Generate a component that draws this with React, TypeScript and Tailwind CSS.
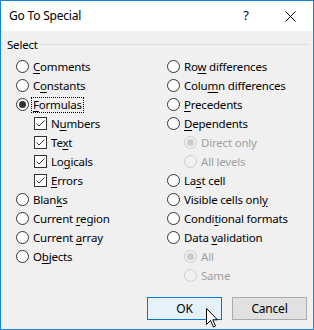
import React from 'react';
import clsx from 'clsx';

type Item = {
  label: React.ReactNode;
  kind: 'radio' | 'check';
  checked?: boolean;
  disabled?: boolean;
  sub?: boolean;
  focus?: boolean;
};

const u = (before: string, key: string, after: string) => (
  <>
    {before}
    <span className="underline underline-offset-[2px]">{key}</span>
    {after}
  </>
);

const leftItems: Item[] = [
  { label: u('', 'C', 'omments'), kind: 'radio' },
  { label: u('C', 'o', 'nstants'), kind: 'radio' },
  { label: u('', 'F', 'ormulas'), kind: 'radio', checked: true, focus: true },
  { label: u('N', 'u', 'mbers'), kind: 'check', checked: true, sub: true },
  { label: u('Te', 'x', 't'), kind: 'check', checked: true, sub: true },
  { label: u('Lo', 'g', 'icals'), kind: 'check', checked: true, sub: true },
  { label: u('', 'E', 'rrors'), kind: 'check', checked: true, sub: true },
  { label: u('Blan', 'k', 's'), kind: 'radio' },
  { label: u('Current ', 'r', 'egion'), kind: 'radio' },
  { label: u('Current ', 'a', 'rray'), kind: 'radio' },
  { label: u('O', 'b', 'jects'), kind: 'radio' },
];

const rightItems: Item[] = [
  { label: u('Ro', 'w', ' differences'), kind: 'radio' },
  { label: u('Colu', 'm', 'n differences'), kind: 'radio' },
  { label: u('', 'P', 'recedents'), kind: 'radio' },
  { label: u('', 'D', 'ependents'), kind: 'radio' },
  { label: 'Direct only', kind: 'radio', checked: true, disabled: true, sub: true },
  { label: 'All levels', kind: 'radio', disabled: true, sub: true },
  { label: u('La', 's', 't cell'), kind: 'radio' },
  { label: u('Visible cells onl', 'y', ''), kind: 'radio' },
  { label: u('Condi', 't', 'ional formats'), kind: 'radio' },
  { label: u('Data ', 'v', 'alidation'), kind: 'radio' },
  { label: 'All', kind: 'radio', checked: true, disabled: true, sub: true },
  { label: 'Same', kind: 'radio', disabled: true, sub: true },
];

const Radio = ({ checked, disabled }: { checked?: boolean; disabled?: boolean }) => (
  <span
    className={clsx(
      'w-[13px] h-[13px] rounded-full border flex items-center justify-center shrink-0',
      disabled ? 'border-[#cccccc] bg-[#f0f0f0]' : 'border-[#333333] bg-white'
    )}
  >
    {checked && (
      <span className={clsx('w-[7px] h-[7px] rounded-full', disabled ? 'bg-[#cccccc]' : 'bg-[#333333]')} />
    )}
  </span>
);

const Check = ({ checked }: { checked?: boolean }) => (
  <span className="w-[13px] h-[13px] border border-[#333333] bg-white flex items-center justify-center shrink-0">
    {checked && (
      <svg width="11" height="11" viewBox="0 0 11 11">
        <polyline points="1.5,5.5 4,8 9.5,2.5" fill="none" stroke="#333333" strokeWidth="1" />
      </svg>
    )}
  </span>
);

const Row = ({ item, subIndent }: { item: Item; subIndent: string }) => (
  <div className={clsx('h-[19px] flex items-center gap-[4px]', item.sub && subIndent)}>
    {item.kind === 'radio' ? <Radio checked={item.checked} disabled={item.disabled} /> : <Check checked={item.checked} />}
    <span
      className={clsx(
        'leading-[14px] whitespace-nowrap',
        item.disabled ? 'text-[#a0a0a0]' : 'text-black',
        item.focus && 'outline outline-1 outline-dotted outline-black -ml-[1px] px-[1px]'
      )}
    >
      {item.label}
    </span>
  </div>
);

const Cursor = () => (
  <svg className="absolute left-[205px] top-[307px]" width="13" height="20" viewBox="0 0 13 20">
    <path
      d="M0.5 0.5 L0.5 16.5 L4.5 12.5 L7.5 19 L9.5 18 L6.8 11.8 L11.5 11.8 Z"
      fill="white"
      stroke="black"
      strokeWidth="1"
      strokeLinejoin="miter"
    />
  </svg>
);

export default function App() {
  return (
    <div
      className="relative w-[314px] h-[330px] border border-[#1883d7] flex flex-col bg-[#f0f0f0] text-[11.5px] tracking-[-0.2px] text-black"
      style={{ fontFamily: '"Noto Sans", sans-serif' }}
    >
      <div className="h-[30px] bg-white flex items-center pl-[8px] shrink-0">
        <span className="flex-1 text-[12px]">Go To Special</span>
        <span className="w-[20px] text-center text-[13px] mr-[29px]">?</span>
        <svg className="mr-[17px]" width="11" height="11" viewBox="0 0 11 11">
          <path d="M0.5 0.5 L10.5 10.5 M10.5 0.5 L0.5 10.5" stroke="black" strokeWidth="1" />
        </svg>
      </div>

      <div className="flex-1 flex flex-col">
        <div className="flex items-center h-[14px] mt-[7px] pl-[6px] pr-[5px]">
          <span className="leading-[14px]">Select</span>
          <span className="flex-1 h-px bg-[#dcdcdc] ml-[2px] mb-[1px]" />
        </div>

        <div className="flex pl-[15px] mt-[5px]">
          <div className="w-[151px] flex flex-col">
            {leftItems.map((item, i) => (
              <Row key={i} item={item} subIndent="pl-[18px]" />
            ))}
          </div>
          <div className="flex flex-col">
            {rightItems.map((item, i) => (
              <Row key={i} item={item} subIndent="pl-[17px]" />
            ))}
          </div>
        </div>

        <div className="flex justify-end gap-[10px] pr-[6px] mt-[12px]">
          <button className="w-[75px] h-[23px] border border-[#0078d7] bg-[#e5f1fb] text-[12px] leading-none">
            OK
          </button>
          <button className="w-[75px] h-[23px] border border-[#adadad] bg-[#e1e1e1] text-[12px] leading-none">
            Cancel
          </button>
        </div>
      </div>
      <Cursor />
    </div>
  );
}
